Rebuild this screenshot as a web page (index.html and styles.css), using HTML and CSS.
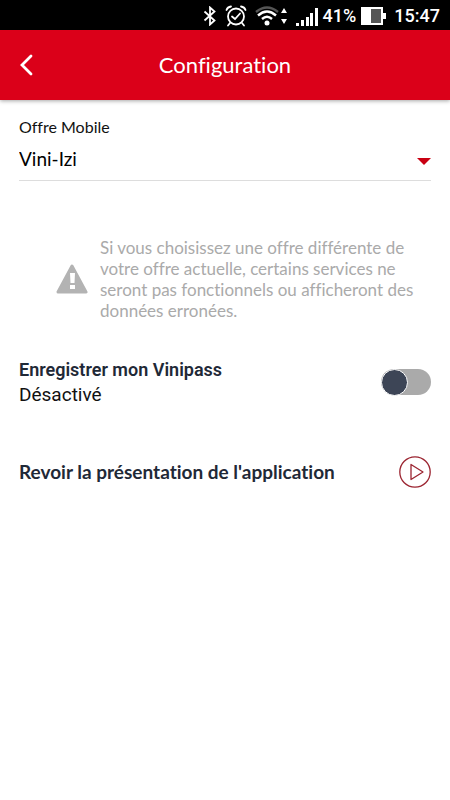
FILE: index.html
```html
<!DOCTYPE html>
<html lang="fr">
<head>
<meta charset="utf-8">
<meta name="viewport" content="width=device-width, initial-scale=1">
<title>Configuration</title>
<link rel="stylesheet" href="styles.css">
</head>
<body>
<div class="status">
  <svg class="bluetooth" width="14" height="20" viewBox="0 0 14 20" aria-hidden="true"><path d="M1.5 5.5 11.5 14.5 7 18.5V1.5L11.5 5.5 1.5 14.5" fill="none" stroke="#fff" stroke-width="1.8"/></svg>
  <svg class="alarm" width="22" height="22" viewBox="0 0 22 22" aria-hidden="true"><g fill="none" stroke="#fff" stroke-width="1.8" stroke-linecap="round"><circle cx="11" cy="11.500" r="8"/><path d="M1.500 5Q2.500 2 6 1.500M20.500 5Q19.500 2 16 1.500M5 18 3 20.500M17 18 19 20.500M7 11.500 10 14 15 8.500"/></g></svg>
  <svg class="wifi" width="24" height="20" viewBox="0 0 24 20" aria-hidden="true"><g fill="none" stroke="#fff" stroke-width="2.400"><path d="M1 6Q12-3 23 6" stroke="#555"/><path d="M3 9.500Q12 1.500 21 9.500M7 13Q12 8.500 17 13"/></g><circle cx="12" cy="17" r="2.500" fill="#fff"/></svg>
  <svg class="traffic" width="8" height="16" viewBox="0 0 8 16" aria-hidden="true"><path d="M4 0 7 5H1ZM4 16 1 11H7Z" fill="#fff"/></svg>
  <svg class="signal" width="22" height="18" viewBox="0 0 22 18" aria-hidden="true"><path d="M0 15h3v3H0zM5 12h3v6H5zM10 9h3v9h-3zM14 5h3v13h-3zM19 0h3v18h-3z" fill="#fff"/></svg>
  <span class="percent">41%</span>
  <svg class="battery" width="26" height="18" viewBox="0 0 26 18" aria-hidden="true"><path d="M1 1H21V17H1Z" fill="#555" stroke="#fff" stroke-width="2"/><path d="M0 0H10V18H0ZM22 6h3v6h-3z" fill="#fff"/></svg>
  <span class="clock">15:47</span>
</div>
<header class="bar">
  <button class="back" type="button" aria-label="Retour"><svg width="14" height="22" viewBox="0 0 14 22"><path d="M12 2 3 11 12 20" fill="none" stroke="#fff" stroke-width="2.800" stroke-linecap="round"/></svg></button>
  <h1>Configuration</h1>
</header>
<main>
  <div class="field">
    <label for="offer">Offre Mobile</label>
    <div class="picker">
      <select id="offer"><option>Vini-Izi</option></select>
      <svg class="caret" width="14" height="7" viewBox="0 0 14 7" aria-hidden="true"><path d="M0 0H14L7 7Z" fill="#c90012"/></svg>
    </div>
  </div>
  <div class="notice">
    <svg width="32" height="30" viewBox="0 0 32 30" aria-hidden="true"><path d="M16 2 30 28H2Z" fill="#b3b3b3" stroke="#b3b3b3" stroke-width="3" stroke-linejoin="round"/><path d="M14 9h5l-.5 10h-4zM14 21h5v4h-5z" fill="#fff"/></svg>
    <p>Si vous choisissez une offre différente de votre offre actuelle, certains services ne seront pas fonctionnels ou afficheront des données erronées.</p>
  </div>
  <div class="row vinipass">
    <label for="pass"><strong>Enregistrer mon Vinipass</strong><span>Désactivé</span></label>
    <input id="pass" class="switch" type="checkbox" role="switch">
  </div>
  <div class="row tour">
    <h2 id="tour">Revoir la présentation de l'application</h2>
    <button class="play" type="button" aria-labelledby="tour"><svg width="32" height="32" viewBox="0 0 32 32"><g fill="none" stroke="#9b2430" stroke-width="1.300"><circle cx="16" cy="16" r="15.200"/><path d="M12 8.500 24 16 12 23.500Z" stroke-linejoin="round"/></g></svg></button>
  </div>
</main>
</body>
</html>
```
FILE: styles.css
```css
* { box-sizing: border-box; }
body {
  margin: 0;
  background: #fff;
  color: #111;
  font-family: Lato, sans-serif;
  font-variant-ligatures: none;
}
h1, h2, p { margin: 0; }
svg { display: block; flex: none; }
button {
  padding: 0;
  border: 0;
  background: none;
  cursor: pointer;
}
.status {
  display: flex;
  align-items: center;
  justify-content: flex-end;
  height: 30px;
  padding: 2px 10px 0 0;
  background: #000;
  color: #fff;
  font: 500 18px/28px Roboto, sans-serif;
}
.alarm { margin-left: 8px; }
.wifi { margin-left: 8px; }
.traffic { margin-left: 1px; }
.signal { margin: 2px 5px 0 8px; }
.battery { margin: 0 7px 0 5px; }
.bar {
  display: grid;
  grid-template-columns: 52px 1fr 52px;
  align-items: center;
  height: 70px;
  background: #db0019;
  color: #fff;
  box-shadow: 0 1px 4px rgba(0, 0, 0, .35);
}
.back {
  display: grid;
  place-items: center;
  height: 48px;
}
h1 {
  font-size: 22px;
  font-weight: 400;
  line-height: 28px;
  text-align: center;
}
main { padding: 17px 19px; }
.field { border-bottom: 1px solid #ddd; }
.field label {
  display: block;
  font-size: 16px;
  line-height: 20px;
}
.picker {
  position: relative;
  height: 43px;
}
select {
  width: 100%;
  height: 43px;
  padding: 0;
  border: 0;
  background: none;
  color: #000;
  font: 19px Lato, sans-serif;
  appearance: none;
}
.caret {
  position: absolute;
  right: 0;
  top: 21px;
  pointer-events: none;
}
.notice {
  display: flex;
  align-items: center;
  gap: 12px;
  margin: 56px 0 0 37px;
  color: #aaa;
}
.notice p {
  font-size: 17px;
  line-height: 21px;
}
.row {
  display: flex;
  align-items: center;
  justify-content: space-between;
}
.vinipass { margin-top: 36px; }
.vinipass label {
  display: grid;
  font: 19px/25px Roboto, sans-serif;
}
.vinipass strong {
  color: #1f2937;
  font-size: 18px;
  font-weight: 600;
}
.switch {
  appearance: none;
  display: flex;
  align-items: center;
  width: 50px;
  height: 26px;
  margin: 0;
  border-radius: 13px;
  background: #aaa;
}
.switch::before {
  content: "";
  width: 25px;
  height: 25px;
  border: 1px solid #fff;
  border-radius: 50%;
  background: #3d4556;
}
.switch:checked { justify-content: flex-end; }
.tour { margin-top: 49px; }
h2 {
  color: #1f2937;
  font-size: 19px;
  font-weight: 700;
  line-height: 24px;
}
```
